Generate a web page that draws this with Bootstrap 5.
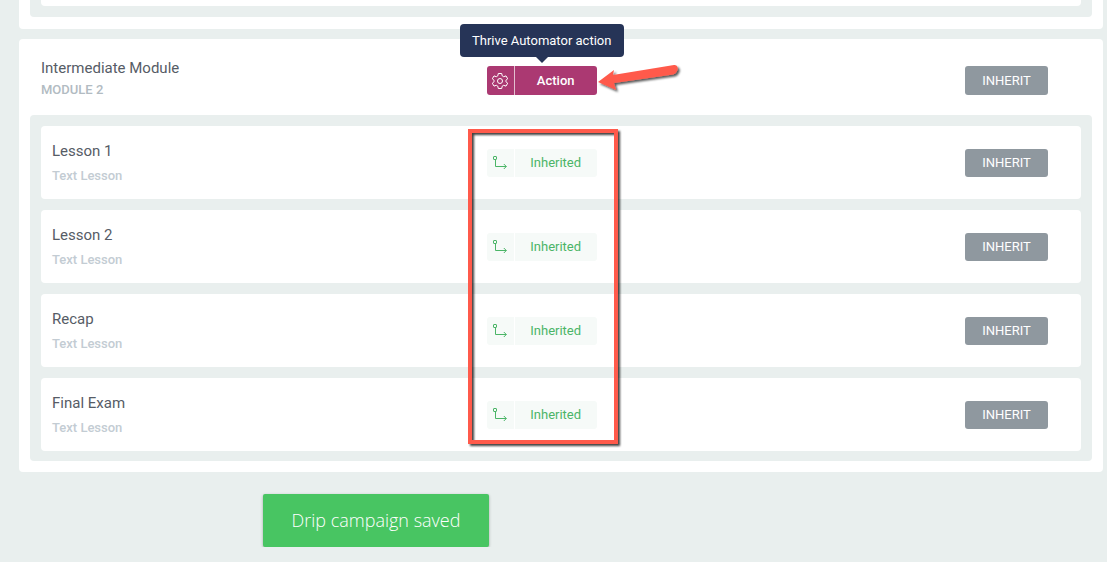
<!DOCTYPE html>
<html lang="en">
<head>
<meta charset="utf-8">
<meta name="viewport" content="width=device-width, initial-scale=1">
<title>Drip campaign</title>
<link rel="stylesheet" href="https://cdn.jsdelivr.net/npm/bootstrap@5.3.0/dist/css/bootstrap.min.css">
<style>
  body { background: #e9efee; font-family: Roboto, "Liberation Sans", sans-serif; color: #565c66; overflow-x: hidden; }
  .page { padding: 0 4px 0 19px; }
  .module { background: #fff; border-radius: 4px; padding: 0 11px 11px; }
  .module + .module { margin-top: 10px; }
  .module-cut { border-radius: 0 0 4px 4px; padding-bottom: 12px; }
  .tray { background: #e9efee; border-radius: 4px; padding: 11px 11px 10px; }
  .tray-cut { border-radius: 0 0 4px 4px; padding-top: 0; padding-bottom: 11px; }
  .lesson-cut { height: 6px; background: #fff; border-radius: 0 0 4px 4px; }
  .cols { display: grid; grid-template-columns: 3fr 4fr; align-items: center; }
  .module-head { min-height: 76px; margin: 0 11px; padding-top: 7px; }
  .module-name { padding-bottom: 3px; }
  .lessons { gap: 11px; }
  .lesson { background: #fff; border-radius: 4px; min-height: 73px; }
  .lesson-name { padding: 2px 0 0 11px; }
  .item-title { font-size: 15px; line-height: 20px; font-weight: 400; margin: 0; }
  .item-sub { font-size: 13px; line-height: 20px; font-weight: 500; color: #b2bbc2; margin: 2px 0 0; }
  .lesson .item-sub { color: #c3ccd3; margin-top: 5px; }
  .controls { padding-right: 33px; }
  .status { width: 110px; height: 28px; font-size: 13px; line-height: 28px; border: 0; border-radius: 3px; padding: 0; display: flex; overflow: hidden; }
  .status-icon { width: 28px; height: 100%; flex: none; display: flex; align-items: center; justify-content: center; border-right: 1px solid #fff; }
  .status-text { flex: 1; text-align: center; }
  .status-action { background: #ab3972; color: #fff; font-weight: 500; height: 29px; line-height: 30px; }
  .status-action .status-icon { border-color: #e3bfd0; }
  .status-inherited { background: #f6faf8; color: #4bb567; }
  .btn-inherit { --bs-btn-color: #fff; --bs-btn-bg: #8f989f; --bs-btn-hover-color: #fff; --bs-btn-hover-bg: #7d868d; --bs-btn-border-width: 0; --bs-btn-border-radius: 3px; --bs-btn-padding-x: 0; --bs-btn-padding-y: 0; --bs-btn-font-size: 13px; width: 83px; height: 28px; line-height: 28px; }
  .module-head .btn-inherit { height: 29px; }
  .tip { left: 50%; bottom: 38px; transform: translateX(-50%); background: #263457; color: #fff; font-size: 13px; line-height: 33px; border-radius: 4px; width: 164px; text-align: center; white-space: nowrap; z-index: 2; }
  .tip::after { content: ""; position: absolute; left: 50%; top: 100%; margin-left: -6px; border: 6px solid transparent; border-top-color: #263457; border-bottom: 0; }
  .arrow { left: 108px; top: -7px; z-index: 2; pointer-events: none; }
  .frame-layer { inset: 3px 0 7px; align-items: stretch; pointer-events: none; }
  .frame { grid-column: 2; width: 150px; margin-left: -19px; border: 4px solid #ff5a4b; filter: drop-shadow(2px 2px 1px rgba(0,0,0,.75)); }
  .saved { background: #48c562; color: #fff; font-family: "Open Sans", sans-serif; font-weight: 300; font-size: 18px; line-height: 53px; width: 226px; text-align: center; border-radius: 2px; margin: 22px 0 0 244px; box-shadow: 0 1px 3px rgba(0,0,0,.3); }
</style>
</head>
<body>
<svg width="0" height="0" class="position-absolute" aria-hidden="true">
  <symbol id="branch" viewBox="0 0 14 14"><g fill="none" stroke="currentColor" stroke-width="1"><rect x="0.500" y="0.500" width="3" height="3" rx="0.500"/><path d="M2.500 3.500V10.500H13.300M10.800 8L13.300 10.500L10.800 13"/></g></symbol>
</svg>
<main class="page">
  <section class="module module-cut">
    <div class="tray tray-cut"><div class="lesson-cut"></div></div>
  </section>

  <section class="module">
    <header class="cols module-head">
      <div class="module-name">
        <h2 class="item-title">Intermediate Module</h2>
        <p class="item-sub">MODULE 2</p>
      </div>
      <div class="controls d-flex justify-content-between align-items-center">
        <div class="position-relative">
          <div class="tip position-absolute" role="tooltip" id="action-tip">Thrive Automator action</div>
          <button type="button" class="status status-action" aria-describedby="action-tip">
            <span class="status-icon"><svg width="18" height="18" viewBox="0 0 18 18" fill="none" stroke="currentColor" stroke-width="1" stroke-linejoin="round" aria-hidden="true"><path d="M7.300 1.500h3.400l.5 2.300 1.500.9 2.300-.8 1.700 2.900-1.800 1.500v1.400l1.800 1.500-1.700 2.900-2.300-.8-1.500.9-.5 2.300H7.300l-.5-2.300-1.500-.9-2.300.8-1.700-2.900 1.800-1.500V8.300L1.300 6.800 3 3.900l2.300.8 1.500-.9z"/><circle cx="9" cy="9" r="2.500"/></svg></span>
            <span class="status-text">Action</span>
          </button>
          <svg class="arrow position-absolute" width="90" height="42" viewBox="0 0 90 42" aria-hidden="true">
            <defs><filter id="shade" x="-10%" y="-20%" width="120%" height="150%"><feDropShadow dx="2" dy="2" stdDeviation="1.200" flood-color="#000" flood-opacity=".65"/></filter></defs>
            <path filter="url(#shade)" fill="#ff5a4b" d="M3 23L19 11L18 16L79 6C82 5.500 84 9 82 12C81 14 80 15 78 15.500L19 24L21 31Z"/>
          </svg>
        </div>
        <button type="button" class="btn btn-inherit">INHERIT</button>
      </div>
    </header>

    <div class="tray">
      <div class="lessons d-flex flex-column position-relative">
        <article class="lesson cols">
          <div class="lesson-name"><h3 class="item-title">Lesson 1</h3><p class="item-sub">Text Lesson</p></div>
          <div class="controls d-flex justify-content-between align-items-center">
            <div class="status status-inherited"><span class="status-icon"><svg width="14" height="14" aria-hidden="true"><use href="#branch"/></svg></span><span class="status-text">Inherited</span></div>
            <button type="button" class="btn btn-inherit">INHERIT</button>
          </div>
        </article>
        <article class="lesson cols">
          <div class="lesson-name"><h3 class="item-title">Lesson 2</h3><p class="item-sub">Text Lesson</p></div>
          <div class="controls d-flex justify-content-between align-items-center">
            <div class="status status-inherited"><span class="status-icon"><svg width="14" height="14" aria-hidden="true"><use href="#branch"/></svg></span><span class="status-text">Inherited</span></div>
            <button type="button" class="btn btn-inherit">INHERIT</button>
          </div>
        </article>
        <article class="lesson cols">
          <div class="lesson-name"><h3 class="item-title">Recap</h3><p class="item-sub">Text Lesson</p></div>
          <div class="controls d-flex justify-content-between align-items-center">
            <div class="status status-inherited"><span class="status-icon"><svg width="14" height="14" aria-hidden="true"><use href="#branch"/></svg></span><span class="status-text">Inherited</span></div>
            <button type="button" class="btn btn-inherit">INHERIT</button>
          </div>
        </article>
        <article class="lesson cols">
          <div class="lesson-name"><h3 class="item-title">Final Exam</h3><p class="item-sub">Text Lesson</p></div>
          <div class="controls d-flex justify-content-between align-items-center">
            <div class="status status-inherited"><span class="status-icon"><svg width="14" height="14" aria-hidden="true"><use href="#branch"/></svg></span><span class="status-text">Inherited</span></div>
            <button type="button" class="btn btn-inherit">INHERIT</button>
          </div>
        </article>
        <div class="frame-layer cols position-absolute"><div class="frame"></div></div>
      </div>
    </div>
  </section>

  <div class="saved" role="status">Drip campaign saved</div>
</main>
<script src="https://cdn.jsdelivr.net/npm/bootstrap@5.3.0/dist/js/bootstrap.bundle.min.js"></script>
</body>
</html>
